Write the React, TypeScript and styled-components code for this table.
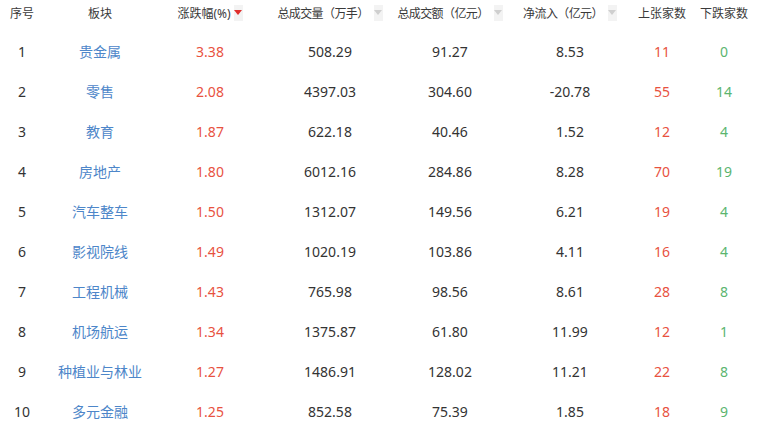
import React from "react";
import styled, { createGlobalStyle } from "styled-components";

const Global = createGlobalStyle`
  html, body { margin: 0; padding: 0; background: #fff; }
  body { font-family: "Noto Sans", "Noto Sans CJK SC", sans-serif; }
`;

const COLS = "44px 112px 108px 132px 108px 132px 52px 72px";

const Table = styled.div`
  width: 760px;
  color: #333;
`;

const HeadRow = styled.div`
  display: grid;
  grid-template-columns: ${COLS};
  height: 26px;
  align-items: center;
  margin-bottom: 5px;
  font-size: 12px;
`;

const HeadCell = styled.div<{ $gap?: number }>`
  display: flex;
  align-items: center;
  justify-content: center;
  gap: ${(p) => p.$gap ?? 5}px;
  color: #3a3a3a;
  white-space: nowrap;
`;

const HeadText = styled.span<{ $tight?: boolean }>`
  letter-spacing: ${(p) => (p.$tight ? "-0.6px" : "0")};
`;

const SortBox = styled.span`
  display: inline-flex;
  align-items: flex-start;
  justify-content: center;
  width: 9px;
  height: 16px;
  background: #f3f3f3;
  padding-top: 5px;
  box-sizing: border-box;
`;

const Row = styled.div`
  display: grid;
  grid-template-columns: ${COLS};
  height: 40px;
  align-items: center;
  font-size: 14px;
`;

const Cell = styled.div<{ $color?: string }>`
  text-align: center;
  color: ${(p) => p.$color || "#333"};
  white-space: nowrap;
`;

const RED = "#e8523f";
const GREEN = "#5bb56f";
const BLUE = "#4d86c9";

function SortIcon({ active }: { active?: boolean }) {
  return (
    <SortBox>
      <svg width="8" height="5" viewBox="0 0 8 5">
        <polygon points="0,0 8,0 4,5" fill={active ? "#e0302e" : "#cfcfcf"} />
      </svg>
    </SortBox>
  );
}

const data: [string, string, string, string, string, string, string][] = [
  ["贵金属", "3.38", "508.29", "91.27", "8.53", "11", "0"],
  ["零售", "2.08", "4397.03", "304.60", "-20.78", "55", "14"],
  ["教育", "1.87", "622.18", "40.46", "1.52", "12", "4"],
  ["房地产", "1.80", "6012.16", "284.86", "8.28", "70", "19"],
  ["汽车整车", "1.50", "1312.07", "149.56", "6.21", "19", "4"],
  ["影视院线", "1.49", "1020.19", "103.86", "4.11", "16", "4"],
  ["工程机械", "1.43", "765.98", "98.56", "8.61", "28", "8"],
  ["机场航运", "1.34", "1375.87", "61.80", "11.99", "12", "1"],
  ["种植业与林业", "1.27", "1486.91", "128.02", "11.21", "22", "8"],
  ["多元金融", "1.25", "852.58", "75.39", "1.85", "18", "9"],
];

export default function App() {
  return (
    <>
      <Global />
      <Table>
        <HeadRow>
          <HeadCell>序号</HeadCell>
          <HeadCell>板块</HeadCell>
          <HeadCell $gap={3}>
            <HeadText>涨跌幅(%)</HeadText>
            <SortIcon active />
          </HeadCell>
          <HeadCell>
            <HeadText $tight>总成交量（万手）</HeadText>
            <SortIcon />
          </HeadCell>
          <HeadCell>
            <HeadText $tight>总成交额（亿元）</HeadText>
            <SortIcon />
          </HeadCell>
          <HeadCell>
            <HeadText $tight>净流入（亿元）</HeadText>
            <SortIcon />
          </HeadCell>
          <HeadCell>上张家数</HeadCell>
          <HeadCell>下跌家数</HeadCell>
        </HeadRow>
        {data.map((r, i) => (
          <Row key={i}>
            <Cell>{i + 1}</Cell>
            <Cell $color={BLUE}>{r[0]}</Cell>
            <Cell $color={RED}>{r[1]}</Cell>
            <Cell>{r[2]}</Cell>
            <Cell>{r[3]}</Cell>
            <Cell>{r[4]}</Cell>
            <Cell $color={RED}>{r[5]}</Cell>
            <Cell $color={GREEN}>{r[6]}</Cell>
          </Row>
        ))}
      </Table>
    </>
  );
}
